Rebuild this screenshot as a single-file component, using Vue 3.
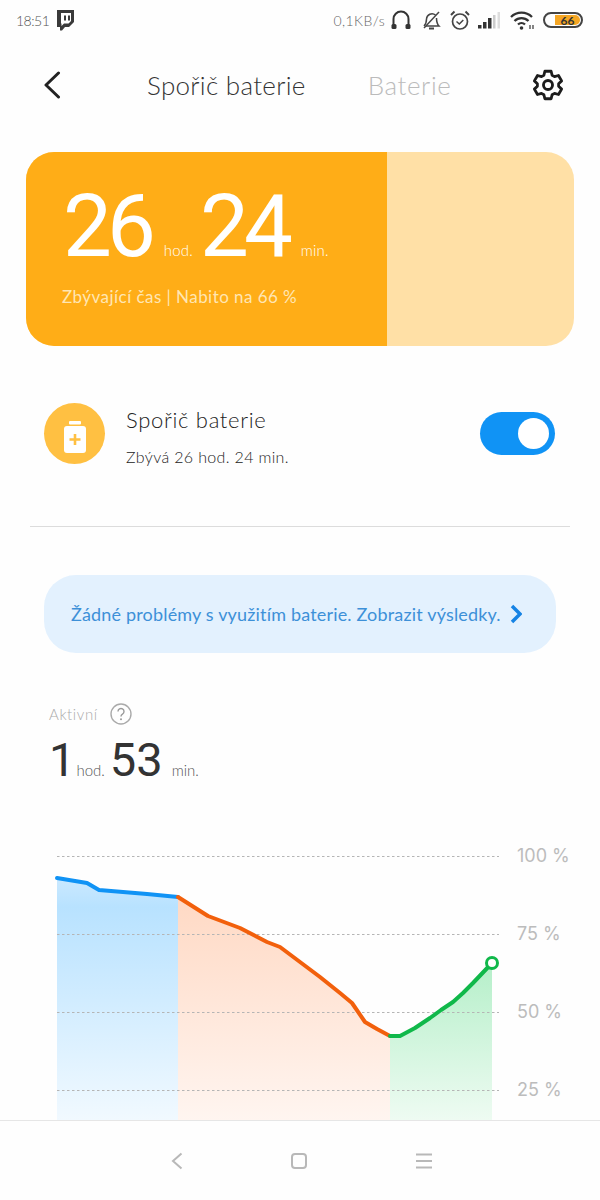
<script setup>
const grid = [856, 934, 1012, 1090].map((y, i) => ({ y: y - 840, label: ['100 %', '75 %', '50 %', '25 %'][i] }))
const blue = '57,38 87,43 99,50 147,54 178,57'
const orange = '178,57 208,76 240,88 267,102 280,107 320,137 340,153 352,163 365,182 377,189 390,196'
const green = '390,196 400,196 415,188 430,178 441,170 453,162 463,153 473,143 492,123'
</script>

<template>
  <div class="page">
    <div class="status">
      <div class="status-left">
        <span class="clock">18:51</span>
        <svg class="twitch" viewBox="0 0 20 22" width="20" height="22">
          <path fill="#3a3a3a" d="M2 1h17v12l-5 5h-4l-3 3.500H5V18H2z" />
          <path fill="#fff" d="M6 4h10v8l-2.500 2.500H9L6.500 17v-2.500H6z" />
          <path fill="#3a3a3a" d="M9 6.500h2v5H9zM13 6.500h2v5h-2z" />
        </svg>
      </div>
      <div class="status-right">
        <span class="speed">0,1KB/s</span>
        <svg width="22" height="22" viewBox="0 0 22 22" class="ic-head">
          <path d="M3.500 16V10a7.500 7.500 0 0 1 15 0v6" fill="none" stroke="#333" stroke-width="2" />
          <rect x="1.500" y="15" width="5" height="5" rx="1.500" fill="#333" />
          <rect x="15.500" y="15" width="5" height="5" rx="1.500" fill="#333" />
        </svg>
        <svg width="22" height="22" viewBox="0 0 22 22" class="ic-bell">
          <path d="M4 17c2-2 2.500-4 2.500-7a5.500 5.500 0 0 1 9-4M16.500 9c0 3 .5 6 2.500 8H6" fill="none" stroke="#444" stroke-width="1.500" />
          <path d="M4 19L19 3" stroke="#444" stroke-width="1.500" />
          <path d="M9 19.500h5" stroke="#444" stroke-width="2" />
        </svg>
        <svg width="22" height="22" viewBox="0 0 22 22" class="ic-alarm">
          <circle cx="11" cy="12.500" r="7.500" fill="none" stroke="#444" stroke-width="1.700" />
          <path d="M7.500 12.500l2.800 2.500 4-4" fill="none" stroke="#444" stroke-width="1.500" />
          <path d="M2 6l3.500-3.500M20 6l-3.500-3.500" stroke="#444" stroke-width="2" />
        </svg>
        <svg width="23" height="18" viewBox="0 0 23 18" class="ic-signal">
          <rect x="0" y="14" width="3.500" height="3.500" fill="#333" />
          <rect x="5" y="11" width="3.500" height="6.500" fill="#333" />
          <rect x="10" y="7" width="3.500" height="10.500" fill="#333" />
          <rect x="15" y="4" width="2.500" height="13.500" fill="#ccc" />
          <rect x="19.500" y="1" width="2.500" height="16.500" fill="#ddd" />
        </svg>
        <svg width="25" height="20" viewBox="0 0 25 20" class="ic-wifi">
          <path d="M1 7a15 15 0 0 1 21 0M4.500 11a10 10 0 0 1 14 0M8 14.500a5 5 0 0 1 7 0" fill="none" stroke="#333" stroke-width="2.300" />
          <circle cx="11.500" cy="18" r="1.800" fill="#333" />
          <path d="M20 15v4M23 15v4" stroke="#444" stroke-width="1.300" />
        </svg>
        <div class="battery">
          <div class="battery-fill"><span>66</span></div>
        </div>
      </div>
    </div>

    <header class="topbar">
      <svg class="back" width="18" height="28" viewBox="0 0 18 28">
        <path d="M15.500 2L3 14l12.500 12" fill="none" stroke="#222" stroke-width="3" stroke-linecap="round" stroke-linejoin="round" />
      </svg>
      <span class="tab active">Spořič baterie</span>
      <span class="tab muted">Baterie</span>
      <svg class="gear" width="34" height="34" viewBox="0 0 24 24">
        <path fill="none" stroke="#1c1c1c" stroke-width="2" stroke-linejoin="round" d="M9.800 2.300h4.400l.7 2.800 1.700 1 2.800-.8 2.200 3.800-2.100 2v1.800l2.100 2-2.200 3.800-2.800-.8-1.700 1-.7 2.800H9.800l-.7-2.800-1.700-1-2.800.8-2.200-3.800 2.100-2v-1.800l-2.100-2 2.200-3.800 2.800.8 1.700-1z" />
        <circle cx="12" cy="12" r="3.200" fill="none" stroke="#1c1c1c" stroke-width="2" />
      </svg>
    </header>

    <section class="card">
      <div class="card-main">
        <div class="time">
          <span class="big">26</span><span class="unit u1">hod.</span>
          <span class="big">24</span><span class="unit u2">min.</span>
        </div>
        <div class="card-sub">Zbývající čas | Nabito na 66 %</div>
      </div>
      <div class="card-rest"></div>
    </section>

    <section class="saver">
      <div class="saver-icon">
        <svg width="26" height="34" viewBox="0 0 26 34">
          <rect x="7" y="1" width="12" height="3.500" rx="1" fill="#fff" />
          <rect x="2" y="6" width="22" height="27" rx="3" fill="#fff" />
          <path d="M13 14v11M7.500 19.500h11" stroke="#FFC042" stroke-width="2.600" />
        </svg>
      </div>
      <div class="saver-text">
        <div class="saver-title">Spořič baterie</div>
        <div class="saver-sub">Zbývá 26 hod. 24 min.</div>
      </div>
      <div class="toggle"><div class="knob"></div></div>
    </section>

    <div class="divider"></div>

    <div class="banner">
      <span>Žádné problémy s využitím baterie. Zobrazit výsledky.</span>
      <svg width="12" height="20" viewBox="0 0 12 20">
        <path d="M2 2l8 8-8 8" fill="none" stroke="#1683E4" stroke-width="3.500" />
      </svg>
    </div>

    <div class="active-head">
      <span>Aktivní</span>
      <svg width="24" height="24" viewBox="0 0 24 24">
        <circle cx="12" cy="12" r="10" fill="none" stroke="#aaa" stroke-width="1.400" />
        <path d="M9 9.500a3 3 0 1 1 4.500 2.600c-1 .6-1.500 1.200-1.500 2.400" fill="none" stroke="#999" stroke-width="1.400" />
        <circle cx="12" cy="17.200" r="1" fill="#999" />
      </svg>
    </div>
    <div class="duration">
      <span class="mid one">1</span><span class="small s1">hod.</span>
      <span class="mid">53</span><span class="small s2">min.</span>
    </div>

    <div class="chart">
      <svg width="600" height="280" viewBox="0 0 600 280">
        <defs>
          <linearGradient id="gb" x1="0" y1="0" x2="0" y2="1">
            <stop offset="0" stop-color="#CBE9FF" /><stop offset="0.12" stop-color="#B8E2FF" /><stop offset="1" stop-color="#F1F9FF" />
          </linearGradient>
          <linearGradient id="go" x1="0" y1="0" x2="0" y2="1">
            <stop offset="0" stop-color="#FFD9C4" /><stop offset="1" stop-color="#FFF5F0" />
          </linearGradient>
          <linearGradient id="gg" x1="0" y1="0" x2="0" y2="1">
            <stop offset="0" stop-color="#B5EFC9" /><stop offset="1" stop-color="#EEFBF2" />
          </linearGradient>
        </defs>
        <polygon :points="blue + ' 178,280 57,280'" fill="url(#gb)" />
        <polygon :points="orange + ' 390,280 178,280'" fill="url(#go)" />
        <polygon :points="green + ' 492,280 390,280'" fill="url(#gg)" />
        <g v-for="g in grid" :key="g.y">
          <line x1="57" x2="499" :y1="g.y + 0.5" :y2="g.y + 0.5" stroke="#b5b5b5" stroke-dasharray="2.500 2.500" />
          <text x="517" :y="g.y + 6" class="axis">{{ g.label }}</text>
        </g>
        <polyline :points="blue" fill="none" stroke="#1093F5" stroke-width="4" stroke-linejoin="round" stroke-linecap="round" />
        <polyline :points="orange" fill="none" stroke="#F2600C" stroke-width="4" stroke-linejoin="round" stroke-linecap="round" />
        <polyline :points="green" fill="none" stroke="#10B84A" stroke-width="4" stroke-linejoin="round" stroke-linecap="round" />
        <circle cx="492" cy="123" r="5.500" fill="#fff" stroke="#10B84A" stroke-width="3" />
      </svg>
    </div>

    <nav class="nav">
      <svg width="12" height="18" viewBox="0 0 12 18">
        <path d="M10.500 1.500L2 9l8.500 7.500" fill="none" stroke="#b8b8b8" stroke-width="2" />
      </svg>
      <svg width="18" height="18" viewBox="0 0 18 18">
        <rect x="2" y="2" width="14" height="14" rx="3" fill="none" stroke="#b8b8b8" stroke-width="2" />
      </svg>
      <svg width="18" height="18" viewBox="0 0 18 18">
        <path d="M1 2.500h16M1 9h16M1 15.500h16" stroke="#b8b8b8" stroke-width="1.800" />
      </svg>
    </nav>
  </div>
</template>

<style scoped>
.page {
  width: 600px;
  height: 1200px;
  overflow: hidden;
  display: flex;
  flex-direction: column;
  background: #fefefe;
  font-family: "Lato", "Noto Sans", sans-serif;
  color: #222;
}
.status {
  height: 40px;
  flex: none;
  display: flex;
  justify-content: space-between;
  align-items: center;
  padding: 0 17px 0 16px;
}
.status-left { display: flex; align-items: center; gap: 8px; }
.clock { font-size: 14px; font-weight: 300; color: #555; width: 31px; letter-spacing: -0.5px; }
.twitch { display: block; }
.status-right { display: flex; align-items: center; }
.speed { font-size: 14px; font-weight: 300; color: #666; letter-spacing: 0.4px; margin-right: 5px; }
.ic-head { margin-right: 8px; }
.ic-bell { margin-right: 7px; }
.ic-alarm { margin-right: 7px; }
.ic-signal { margin-right: 9px; }
.ic-wifi { margin-right: 8px; }
.battery {
  width: 40px;
  height: 16px;
  box-sizing: border-box;
  border: 2px solid #444;
  border-radius: 8px;
  padding: 1px;
  display: flex;
  justify-content: flex-end;
}
.battery-fill {
  width: 25px;
  background: #F5A623;
  border-radius: 0 6px 6px 0;
  display: flex;
  align-items: center;
  justify-content: center;
  font-size: 12px;
  font-weight: 700;
  color: #333;
}
.topbar {
  height: 90px;
  flex: none;
  display: flex;
  align-items: center;
  padding: 0 35px 0 43px;
}
.tab { font-size: 26px; font-weight: 300; white-space: nowrap; letter-spacing: 0.3px; }
.active { margin-left: 86px; color: #333; }
.muted { margin-left: 62px; color: #bbb; letter-spacing: 0.6px; }
.gear { margin-left: auto; }
.card {
  flex: none;
  margin: 22px 26px 0;
  height: 194px;
  border-radius: 28px;
  overflow: hidden;
  display: flex;
  background: #FFE0A6;
}
.card-main {
  width: 361px;
  background: #FFAD17;
  box-sizing: border-box;
  padding: 30px 0 0 37px;
  color: #fff;
}
.time { display: flex; align-items: baseline; height: 88px; line-height: 88px; }
.big { font-family: "Roboto", sans-serif; font-size: 87px; letter-spacing: -5px; }
.unit { font-size: 15px; font-weight: 300; letter-spacing: 0.2px; }
.u1 { margin: 0 7px 0 13px; }
.u2 { margin-left: 13px; }
.card-sub { margin-top: 16px; font-size: 17px; color: #FFE6B3; white-space: nowrap; letter-spacing: 0.45px; margin-left: -1px; }
.saver {
  flex: none;
  margin: 57px 45px 0 44px;
  height: 61px;
  display: flex;
  align-items: center;
}
.saver-icon {
  width: 61px;
  height: 61px;
  border-radius: 50%;
  background: #FFC042;
  display: flex;
  align-items: center;
  justify-content: center;
}
.saver-icon svg { margin-top: 6px; }
.saver-text { margin-left: 21px; align-self: flex-start; }
.saver-title { font-size: 22px; font-weight: 300; line-height: 34px; color: #222; letter-spacing: 0.7px; }
.saver-sub { font-size: 16px; font-weight: 300; line-height: 24px; margin-top: 8px; color: #222; letter-spacing: 0.35px; }
.toggle {
  margin-left: auto;
  width: 75px;
  height: 43px;
  box-sizing: border-box;
  border-radius: 22px;
  background: #1093F5;
  padding: 6px;
  display: flex;
  justify-content: flex-end;
}
.knob { width: 31px; height: 31px; border-radius: 50%; background: #fff; }
.divider { flex: none; height: 1px; margin: 62px 30px 0; background: #dcdcdc; }
.banner {
  flex: none;
  margin: 48px 44px 0;
  height: 78px;
  box-sizing: border-box;
  padding-left: 27px;
  border-radius: 32px;
  background: #E3F1FE;
  display: flex;
  align-items: center;
  gap: 9px;
  font-size: 18px;
  color: #3D90D8;
  white-space: nowrap;
  letter-spacing: 0.17px;
}
.active-head {
  flex: none;
  margin: 49px 0 0 49px;
  height: 24px;
  display: flex;
  align-items: center;
  gap: 11px;
  font-size: 15px;
  font-weight: 300;
  color: #aaa;
  letter-spacing: 0.6px;
}
.duration {
  flex: none;
  margin: 5px 0 0 49px;
  height: 58px;
  display: flex;
  align-items: baseline;
  line-height: 58px;
  color: #333;
}
.mid { font-family: "Roboto", sans-serif; font-size: 47px; }
.small { font-size: 15px; font-weight: 300; color: #555; }
.s1 { margin: 0 5px 0 1px; }
.s2 { margin-left: 9px; }
.chart { flex: 1; min-height: 0; overflow: hidden; margin-top: 51px; }
.chart svg { display: block; }
.axis { font-family: "Inter", sans-serif; font-size: 18px; fill: #bcbcbc; }
.nav {
  flex: none;
  height: 79px;
  border-top: 1px solid #e6e6e6;
  background: #fefefe;
  display: flex;
  align-items: center;
  padding: 0 167px 0 171px;
  justify-content: space-between;
}
</style>
